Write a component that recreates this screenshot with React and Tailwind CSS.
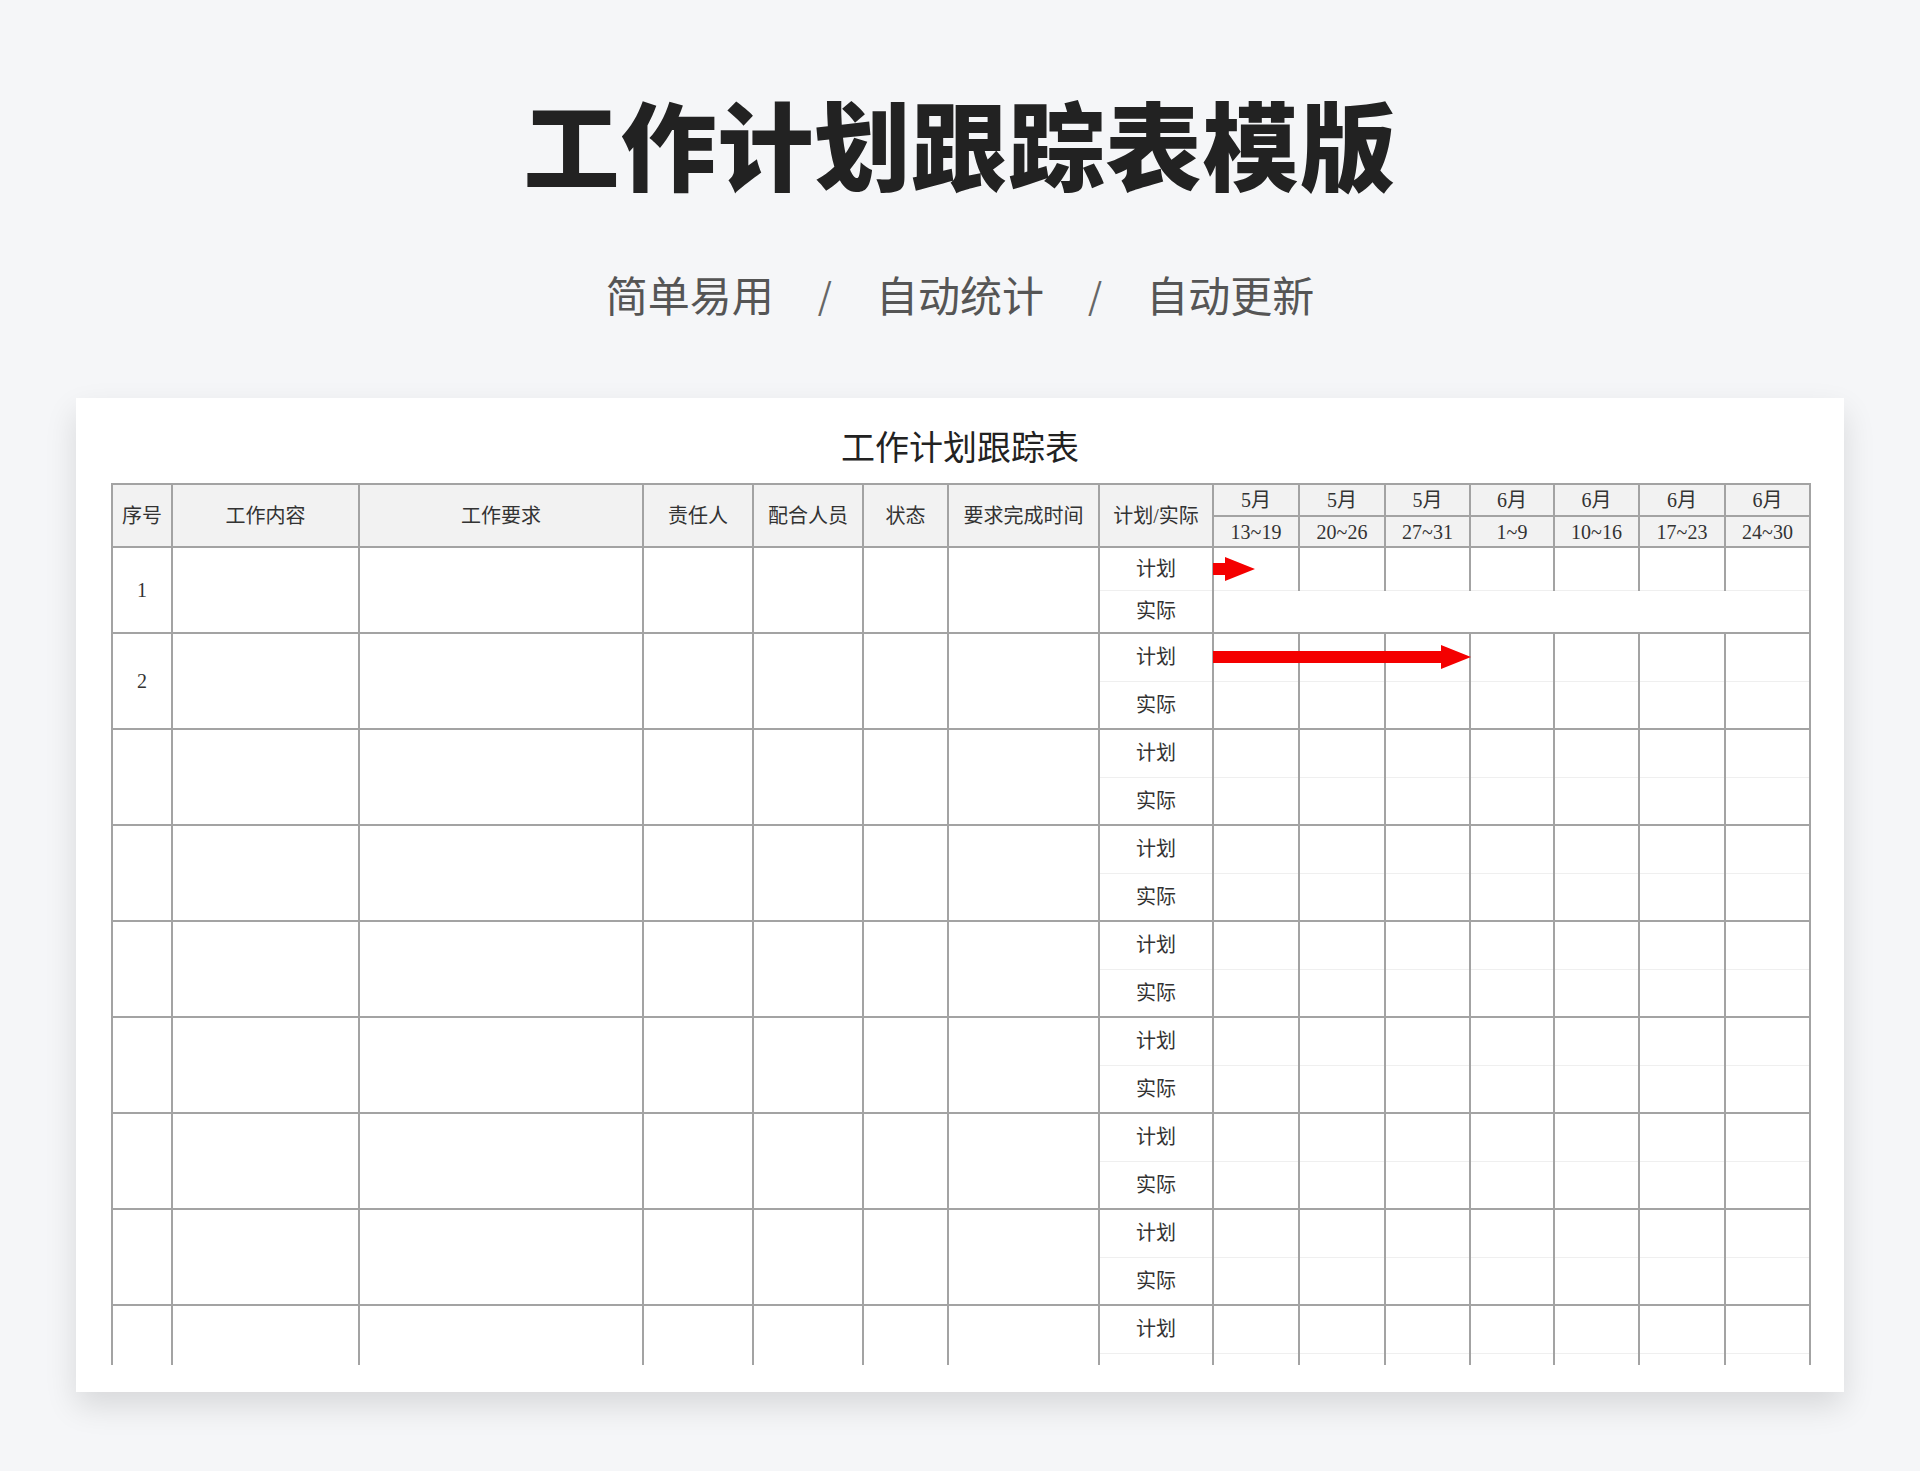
const cols = [60, 187, 284, 110, 110, 85, 151, 114, 86, 86, 85, 84, 85, 86, 85];
const heads = ["序号", "工作内容", "工作要求", "责任人", "配合人员", "状态", "要求完成时间", "计划/实际"];
const weeks = [
  ["5月", "13~19"],
  ["5月", "20~26"],
  ["5月", "27~31"],
  ["6月", "1~9"],
  ["6月", "10~16"],
  ["6月", "17~23"],
  ["6月", "24~30"],
];
const groups = [
  { no: "1", h: 43 },
  { no: "2", h: 48 },
  { no: "", h: 48 },
  { no: "", h: 48 },
  { no: "", h: 48 },
  { no: "", h: 48 },
  { no: "", h: 48 },
  { no: "", h: 48 },
];

const line = "border-2 border-[#a3a3a3]";

function Arrow({ width }) {
  return (
    <svg
      className="absolute left-[-1px] top-1/2 -translate-y-1/2 overflow-visible"
      width={width}
      height="26"
      viewBox={`0 0 ${width} 26`}
    >
      <polygon
        points={`0,7 ${width - 30},7 ${width - 30},1 ${width},13 ${width - 30},25 ${width - 30},19 0,19`}
        fill="#f40000"
      />
    </svg>
  );
}

function Group({ g, idx }) {
  const cell = `${line} text-center align-middle`;
  return (
    <>
      <tr style={{ height: g.h }}>
        <td rowSpan={2} className={cell}>{g.no}</td>
        {[1, 2, 3, 4, 5, 6].map((i) => (
          <td key={i} rowSpan={2} className={cell}></td>
        ))}
        <td className="border-x-2 border-t-2 border-[#a3a3a3] border-b border-b-[#efefef] text-center">计划</td>
        {weeks.map((w, i) => (
          <td key={i} className="border-x-2 border-t-2 border-[#a3a3a3] border-b border-b-[#efefef] relative">
            {i === 0 && idx === 0 && <Arrow width={42} />}
            {i === 0 && idx === 1 && <Arrow width={258} />}
          </td>
        ))}
      </tr>
      <tr style={{ height: g.h }}>
        <td className="border-x-2 border-b-2 border-[#a3a3a3] text-center">实际</td>
        {idx === 0 ? (
          <td colSpan={7} className="border-x-2 border-b-2 border-[#a3a3a3]"></td>
        ) : (
          weeks.map((w, i) => <td key={i} className="border-x-2 border-b-2 border-[#a3a3a3]"></td>)
        )}
      </tr>
    </>
  );
}

export default function App() {
  return (
    <div className="w-[1920px] h-[1471px] bg-[#f5f6f8] flex flex-col items-center overflow-hidden" style={{ fontFamily: '"Noto Sans CJK SC", "Noto Sans", sans-serif' }}>
      <h1 className="mt-[86px] text-[96px] leading-[112px] font-black text-[#222] tracking-[1px]">工作计划跟踪表模版</h1>
      <div className="mt-[68px] flex items-center gap-[44px] text-[42px] leading-[56px] text-[#555]">
        <span>简单易用</span>
        <span className="text-[36px] text-[#666]">/</span>
        <span>自动统计</span>
        <span className="text-[36px] text-[#666]">/</span>
        <span>自动更新</span>
      </div>
      <div className="mt-[76px] w-[1768px] h-[994px] bg-white shadow-[0_14px_30px_rgba(0,0,0,0.12)] px-[35px] overflow-hidden">
        <div className="h-[85px] flex items-center justify-center pt-[10px] text-[34px] text-[#222]">工作计划跟踪表</div>
        <table
          className="border-collapse table-fixed text-[20px] text-[#333]"
          style={{ width: 1698, fontFamily: '"Liberation Serif", "Noto Sans CJK SC", serif' }}
        >
          <colgroup>
            {cols.map((c, i) => (
              <col key={i} style={{ width: c }} />
            ))}
          </colgroup>
          <tbody>
            <tr className="h-[32px] bg-[#f2f2f2]">
              {heads.map((h) => (
                <td key={h} rowSpan={2} className={`${line} text-center whitespace-nowrap overflow-hidden`}>{h}</td>
              ))}
              {weeks.map((w, i) => (
                <td key={i} className={`${line} text-center leading-none`}>{w[0]}</td>
              ))}
            </tr>
            <tr className="h-[31px] bg-[#f2f2f2]">
              {weeks.map((w, i) => (
                <td key={i} className={`${line} text-center leading-none`}>{w[1]}</td>
              ))}
            </tr>
            {groups.map((g, i) => (
              <Group key={i} g={g} idx={i} />
            ))}
            <tr className="h-[48px]">
              {[0, 1, 2, 3, 4, 5, 6].map((i) => (
                <td key={i} className="border-x-2 border-t-2 border-[#a3a3a3]"></td>
              ))}
              <td className="border-x-2 border-t-2 border-[#a3a3a3] border-b border-b-[#efefef] text-center">计划</td>
              {weeks.map((w, i) => (
                <td key={i} className="border-x-2 border-t-2 border-[#a3a3a3] border-b border-b-[#efefef]"></td>
              ))}
            </tr>
            <tr className="h-[12px]">
              {cols.map((c, i) => (
                <td key={i} className="border-x-2 border-[#a3a3a3]"></td>
              ))}
            </tr>
          </tbody>
        </table>
      </div>
    </div>
  );
}
